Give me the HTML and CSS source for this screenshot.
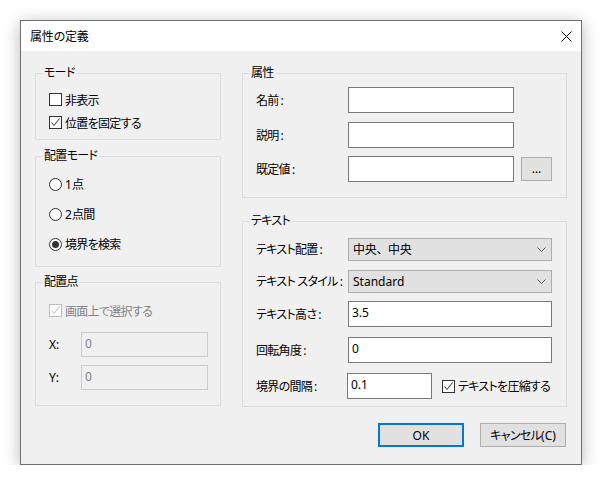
FILE: index.html
```html
<!DOCTYPE html>
<html lang="ja">
<head>
<meta charset="utf-8">
<title>属性の定義</title>
<link rel="stylesheet" href="styles.css">
</head>
<body>
<div class="window">
  <div class="titlebar">
    <span class="title">属性の定義</span>
    <svg class="close" width="11" height="11" viewBox="0 0 11 11"><path d="M0.5 0.5 L10.5 10.5 M10.5 0.5 L0.5 10.5" stroke="#000" stroke-width="1" fill="none"/></svg>
  </div>
  <div class="content">
    <div class="col col-left">
      <div class="group g-mode">
        <div class="glabel">モード</div>
        <div class="gbody">
          <div class="row r-mode"><span class="cb"></span><span>非表示</span></div>
          <div class="row r-mode"><span class="cb"><svg viewBox="0 0 11 11" width="11" height="11"><path d="M1.5 5.5 L4 8.5 L9.5 1.5" stroke="#333" stroke-width="1" fill="none"/></svg></span><span>位置を固定する</span></div>
        </div>
      </div>
      <div class="group g-place">
        <div class="glabel">配置モード</div>
        <div class="gbody">
          <div class="row r-radio"><span class="rb"></span><span><span class="lat">1</span>点</span></div>
          <div class="row r-radio"><span class="rb"></span><span><span class="lat">2</span>点間</span></div>
          <div class="row r-radio"><span class="rb on"><span class="dot"></span></span><span>境界を検索</span></div>
        </div>
      </div>
      <div class="group g-point">
        <div class="glabel">配置点</div>
        <div class="gbody">
          <div class="row r-pick disabled"><span class="cb dis"><svg viewBox="0 0 11 11" width="11" height="11"><path d="M1.5 5.5 L4 8.5 L9.5 1.5" stroke="#bcbcbc" stroke-width="1" fill="none"/></svg></span><span>画面上で選択する</span></div>
          <div class="row r-xy r-x"><span class="xylabel lat">X:</span><span class="input dis w127 lat">0</span></div>
          <div class="row r-xy r-y"><span class="xylabel lat">Y:</span><span class="input dis w127 lat">0</span></div>
        </div>
      </div>
    </div>
    <div class="col col-right">
      <div class="group g-attr">
        <div class="glabel">属性</div>
        <div class="gbody">
          <div class="row r-field r1"><span class="flabel">名前<span class="co">:</span></span><span class="input w166"></span></div>
          <div class="row r-field r2"><span class="flabel">説明<span class="co">:</span></span><span class="input w166"></span></div>
          <div class="row r-field r3"><span class="flabel">既定値<span class="co">:</span></span><span class="input w166"></span><span class="btn dots lat">...</span></div>
        </div>
      </div>
      <div class="group g-text">
        <div class="glabel">テキスト</div>
        <div class="gbody">
          <div class="row r-combo c1"><span class="flabel">テキスト配置<span class="co">:</span></span><span class="combo"><span class="full">中央、中央</span><svg width="9" height="5" viewBox="0 0 9 5"><path d="M0.5 0.5 L4.5 4.5 L8.5 0.5" stroke="#555" stroke-width="1" fill="none"/></svg></span></div>
          <div class="row r-combo c2"><span class="flabel">テキスト スタイル<span class="co">:</span></span><span class="combo"><span class="lat">Standard</span><svg width="9" height="5" viewBox="0 0 9 5"><path d="M0.5 0.5 L4.5 4.5 L8.5 0.5" stroke="#555" stroke-width="1" fill="none"/></svg></span></div>
          <div class="row r-field t1"><span class="flabel">テキスト高さ<span class="co">:</span></span><span class="input w204 lat">3.5</span></div>
          <div class="row r-field t2"><span class="flabel">回転角度<span class="co">:</span></span><span class="input w204 lat">0</span></div>
          <div class="row r-field t3"><span class="flabel">境界の間隔<span class="co">:</span></span><span class="input w85 lat">0.1</span><span class="cb cb-compress"><svg viewBox="0 0 11 11" width="11" height="11"><path d="M1.5 5.5 L4 8.5 L9.5 1.5" stroke="#333" stroke-width="1" fill="none"/></svg></span><span>テキストを圧縮する</span></div>
        </div>
      </div>
      <div class="buttons">
        <span class="btn push ok lat">OK</span>
        <span class="btn push">キャンセル<span class="lat">(C)</span></span>
      </div>
    </div>
  </div>
</div>
</body>
</html>
```
FILE: styles.css
```css
* { box-sizing: border-box; }

body {
  margin: 0;
  background: #ffffff;
  font-family: "Noto Sans", "Noto Sans CJK JP", sans-serif;
  font-size: 12px;
  font-weight: 400;
  color: #000;
  font-feature-settings: "palt";
  letter-spacing: -0.7px;
}

.lat { letter-spacing: 0; }
.co { letter-spacing: 0; margin-left: 2px; }
.full { font-feature-settings: normal; letter-spacing: -0.3px; }

.window {
  margin: 20px 0 0 20px;
  width: 562px;
  height: 445px;
  border: 1px solid #6e6e6e;
  background: #f0f0f0;
  box-shadow: 0 3px 16px rgba(0, 0, 0, 0.28);
  display: flex;
  flex-direction: column;
}

.titlebar {
  height: 30px;
  background: #fff;
  display: flex;
  align-items: center;
  justify-content: space-between;
  padding: 0 9px 0 9px;
  flex: none;
}

.title { line-height: 16px; padding-top: 1px; letter-spacing: -0.2px; }
.close { display: block; }

.content {
  display: flex;
  gap: 21px;
  padding: 0 14px;
}

.col { display: flex; flex-direction: column; }
.col-left { width: 186px; }
.col-right { width: 325px; }

.group {
  border: 1px solid #dcdcdc;
  display: flex;
  flex-direction: column;
  flex: none;
}

.glabel {
  align-self: flex-start;
  margin: -9px 0 0 6px;
  padding: 0 2px;
  height: 16px;
  line-height: 16px;
  background: #f0f0f0;
}

.gbody { display: flex; flex-direction: column; }

.row { display: flex; align-items: center; }

/* モード */
.g-mode { margin-top: 22px; height: 67px; }
.g-mode .gbody { padding: 7px 0 0 13px; }
.r-mode { height: 23px; }

/* 配置モード */
.g-place { margin-top: 16px; height: 111px; }
.g-place .gbody { padding: 5px 0 0 13px; }
.r-radio { height: 30px; }

/* 配置点 */
.g-point { margin-top: 15px; height: 124px; }
.g-point .gbody { padding: 10px 0 0 13px; }
.r-pick { height: 21px; }
.r-xy { height: 25px; }
.r-x { margin-top: 11px; }
.r-y { margin-top: 8px; }
.xylabel { width: 32px; flex: none; }

.disabled { color: #838383; }

/* checkbox & radio */
.cb {
  width: 13px;
  height: 13px;
  border: 1px solid #333;
  background: #fff;
  margin-right: 3px;
  flex: none;
  display: flex;
  align-items: center;
  justify-content: center;
}
.cb svg { display: block; }
.cb.dis { border-color: #bcbcbc; }

.rb {
  width: 13px;
  height: 13px;
  border: 1px solid #333;
  border-radius: 50%;
  background: #fff;
  margin-right: 3px;
  flex: none;
  display: flex;
  align-items: center;
  justify-content: center;
}
.rb .dot {
  width: 7px;
  height: 7px;
  border-radius: 50%;
  background: #333;
}

/* 属性 */
.g-attr { margin-top: 22px; height: 125px; }
.g-attr .gbody { padding: 6px 0 0 13px; }
.r-field { height: 26px; }
.r2 { margin-top: 9px; }
.r3 { margin-top: 8px; }
.flabel { width: 92px; flex: none; padding-bottom: 1px; }

.input {
  height: 26px;
  border: 1px solid #7a7a7a;
  background: #fff;
  padding: 0 3px 3px 3px;
  display: flex;
  align-items: center;
  flex: none;
}
.input.dis { border-color: #cccccc; background: #f0f0f0; color: #838383; height: 25px; }
.w127 { width: 127px; }
.w166 { width: 166px; }
.w204 { width: 204px; }
.w85 { width: 85px; margin-left: -1px; }

.btn {
  background: #e1e1e1;
  border: 1px solid #adadad;
  display: flex;
  align-items: center;
  justify-content: center;
  flex: none;
}
.dots { width: 31px; height: 24px; margin-left: 7px; padding-bottom: 2px; }

/* テキスト */
.g-text { margin-top: 23px; height: 186px; }
.g-text .gbody { padding: 9px 0 0 13px; }
.r-combo { height: 23px; }
.c2 { margin-top: 9px; }
.t1 { margin-top: 8px; }
.t2 { margin-top: 10px; }
.t3 { margin-top: 10px; }

.combo {
  width: 204px;
  height: 23px;
  border: 1px solid #adadad;
  background: #e1e1e1;
  display: flex;
  align-items: center;
  justify-content: space-between;
  padding: 0 5px 1px 4px;
  flex: none;
}
.combo svg { display: block; margin-top: 1px; }

.cb-compress { margin-left: 10px; }

/* buttons */
.buttons {
  display: flex;
  justify-content: flex-end;
  gap: 16px;
  margin-top: 16px;
  padding-right: 1px;
}
.push { width: 86px; height: 24px; }
.ok { border: 2px solid #0078d7; }
```
